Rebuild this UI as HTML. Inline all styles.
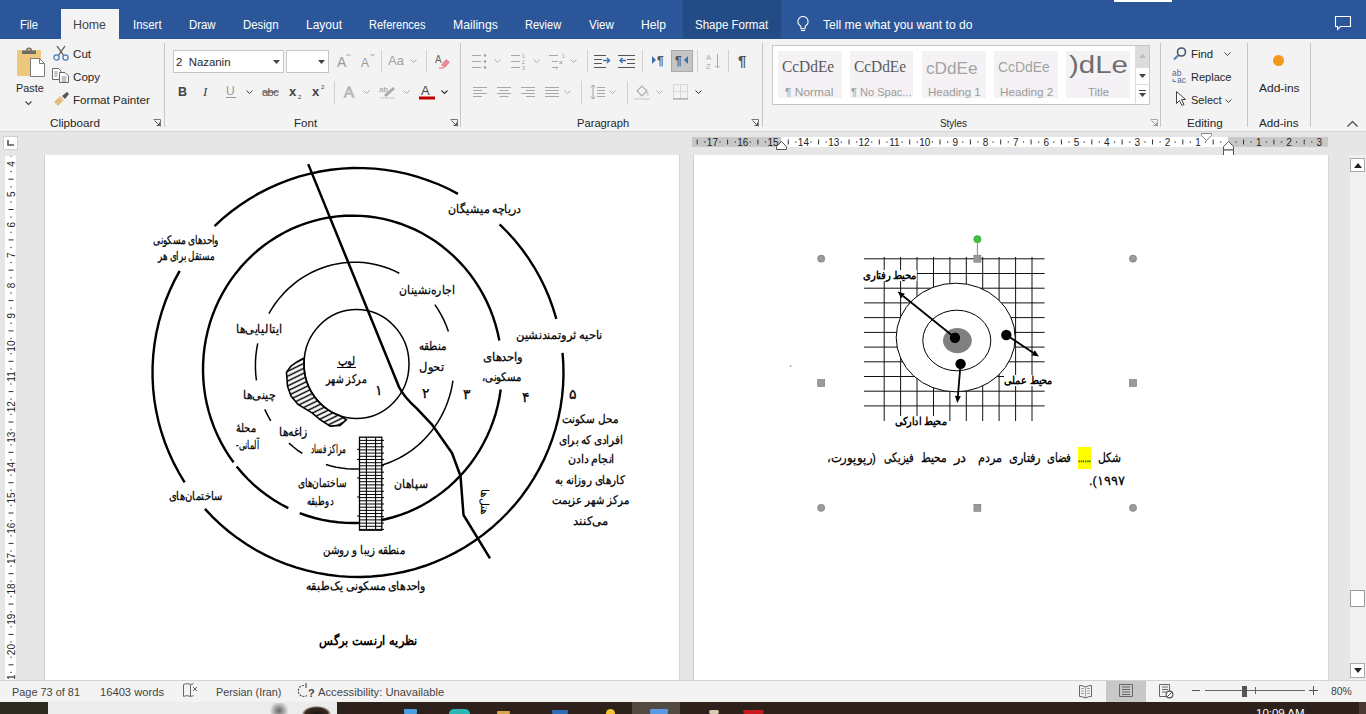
<!DOCTYPE html>
<html><head><meta charset="utf-8">
<style>
*{margin:0;padding:0;box-sizing:border-box}
html,body{width:1366px;height:714px;overflow:hidden;background:#e6e6e6;font-family:"Liberation Sans",sans-serif;position:relative}
.a{position:absolute;white-space:nowrap}
.t{line-height:1}
.fw{transform-origin:0 50%}
svg{overflow:visible}
</style></head><body>

<div class="a" style="left:0px;top:0px;width:1366px;height:39px;background:#2b579a"></div>
<div class="a" style="left:1114px;top:0px;width:58px;height:2px;background:#fff"></div>
<div class="a" style="left:683px;top:0px;width:98px;height:39px;background:#234b86"></div>
<div class="a" style="left:61px;top:9px;width:58px;height:30px;background:#f3f3f3"></div>
<div class="a t fw" style="left:20.4px;top:18.9px;font-size:12px;color:#fff;font-weight:normal;--w:18;">File</div>
<div class="a t fw" style="left:73.4px;top:19.4px;font-size:12px;color:#444;font-weight:normal;--w:33;">Home</div>
<div class="a t fw" style="left:133.2px;top:18.9px;font-size:12px;color:#fff;font-weight:normal;--w:28.6;">Insert</div>
<div class="a t fw" style="left:189.2px;top:18.9px;font-size:12px;color:#fff;font-weight:normal;--w:26.6;">Draw</div>
<div class="a t fw" style="left:243.2px;top:18.9px;font-size:12px;color:#fff;font-weight:normal;--w:35.5;">Design</div>
<div class="a t fw" style="left:306.0px;top:18.9px;font-size:12px;color:#fff;font-weight:normal;--w:36;">Layout</div>
<div class="a t fw" style="left:369.4px;top:18.9px;font-size:12px;color:#fff;font-weight:normal;--w:56.5;">References</div>
<div class="a t fw" style="left:453.2px;top:18.9px;font-size:12px;color:#fff;font-weight:normal;--w:44.8;">Mailings</div>
<div class="a t fw" style="left:525.4px;top:18.9px;font-size:12px;color:#fff;font-weight:normal;--w:36.1;">Review</div>
<div class="a t fw" style="left:588.9px;top:18.9px;font-size:12px;color:#fff;font-weight:normal;--w:24.9;">View</div>
<div class="a t fw" style="left:641.1px;top:18.9px;font-size:12px;color:#fff;font-weight:normal;--w:24.9;">Help</div>
<div class="a t fw" style="left:694.6px;top:18.9px;font-size:12px;color:#fff;font-weight:normal;--w:73.1;">Shape Format</div>
<div class="a t fw" style="left:823.4px;top:18.9px;font-size:12px;color:#fff;font-weight:normal;--w:149.5;">Tell me what you want to do</div>
<svg class="a" style="left:796px;top:15px;" width="14" height="17" viewBox="0 0 14 17"><path d="M7 1.5a5 5 0 0 0-3 9c.6.6 1 1.3 1 2.2v1h4v-1c0-.9.4-1.6 1-2.2a5 5 0 0 0-3-9z" fill="none" stroke="#fff" stroke-width="1.1"/><path d="M5 15.5h4" stroke="#fff" stroke-width="1.1"/></svg>
<svg class="a" style="left:1335px;top:16px;" width="17" height="15" viewBox="0 0 17 15"><path d="M.5 .5h15v10h-10l-3 3v-3h-2z" fill="none" stroke="#fff" stroke-width="1.1"/></svg>
<div class="a" style="left:0px;top:39px;width:1366px;height:92px;background:#f3f3f3"></div>
<div class="a" style="left:0px;top:131px;width:1366px;height:1px;background:#d4d4d4"></div>
<div class="a" style="left:164px;top:43px;width:1px;height:84px;background:#c6c6c6"></div>
<div class="a" style="left:460px;top:43px;width:1px;height:84px;background:#c6c6c6"></div>
<div class="a" style="left:762px;top:43px;width:1px;height:84px;background:#c6c6c6"></div>
<div class="a" style="left:1160px;top:43px;width:1px;height:84px;background:#c6c6c6"></div>
<div class="a" style="left:1247px;top:43px;width:1px;height:84px;background:#c6c6c6"></div>
<div class="a" style="left:1310px;top:43px;width:1px;height:84px;background:#c6c6c6"></div>
<div class="a t fw" style="left:49.6px;top:117.0px;font-size:11.6px;color:#262626;font-weight:normal;--w:49.9;">Clipboard</div>
<div class="a t fw" style="left:293.5px;top:117.0px;font-size:11.6px;color:#262626;font-weight:normal;--w:23.1;">Font</div>
<div class="a t fw" style="left:577.3px;top:117.2px;font-size:11.6px;color:#262626;font-weight:normal;--w:52.2;">Paragraph</div>
<div class="a t fw" style="left:940.1px;top:117.4px;font-size:11.6px;color:#262626;font-weight:normal;--w:26.9;">Styles</div>
<div class="a t fw" style="left:1186.7px;top:117.2px;font-size:11.6px;color:#262626;font-weight:normal;--w:35.7;">Editing</div>
<div class="a t fw" style="left:1259.1px;top:117.2px;font-size:11.6px;color:#262626;font-weight:normal;--w:39.5;">Add-ins</div>
<svg class="a" style="left:153px;top:119px;" width="8" height="8" viewBox="0 0 8 8"><path d="M.5 .5h7v7" fill="none" stroke="#777" stroke-width="1"/><path d="M1.5 1.5l5 5M3.5 6.5h3v-3" fill="none" stroke="#555" stroke-width="1"/></svg>
<svg class="a" style="left:449.5px;top:119px;" width="8" height="8" viewBox="0 0 8 8"><path d="M.5 .5h7v7" fill="none" stroke="#777" stroke-width="1"/><path d="M1.5 1.5l5 5M3.5 6.5h3v-3" fill="none" stroke="#555" stroke-width="1"/></svg>
<svg class="a" style="left:751px;top:119px;" width="8" height="8" viewBox="0 0 8 8"><path d="M.5 .5h7v7" fill="none" stroke="#777" stroke-width="1"/><path d="M1.5 1.5l5 5M3.5 6.5h3v-3" fill="none" stroke="#555" stroke-width="1"/></svg>
<svg class="a" style="left:1150px;top:119px;" width="8" height="8" viewBox="0 0 8 8"><path d="M.5 .5h7v7" fill="none" stroke="#aaa" stroke-width="1"/><path d="M1.5 1.5l5 5M3.5 6.5h3v-3" fill="none" stroke="#999" stroke-width="1"/></svg>
<svg class="a" style="left:1347px;top:121px;" width="11" height="6" viewBox="0 0 11 6"><path d="M.5 5.5l5-5 5 5" fill="none" stroke="#444" stroke-width="1.2"/></svg>
<svg class="a" style="left:16px;top:47px;" width="30" height="30" viewBox="0 0 30 30"><rect x="1" y="3" width="24" height="26" rx="1" fill="#edc87c"/>
<path d="M6 3.5h14v3.5H6z" fill="#6b6b6b"/><path d="M10 3.5a3 3 0 0 1 6 0z" fill="#6b6b6b"/><circle cx="13" cy="2.6" r="1" fill="#edc87c"/>
<path d="M14.5 11.5h9l5 5v13h-14z" fill="#fff" stroke="#7a7a7a" stroke-width="1"/><path d="M23.5 11.5v5h5" fill="none" stroke="#7a7a7a" stroke-width="1"/></svg>
<div class="a t fw" style="left:15.5px;top:81.7px;font-size:11.6px;color:#262626;font-weight:normal;--w:27.7;">Paste</div>
<svg class="a" style="left:25px;top:101px;" width="7" height="4" viewBox="0 0 7 4"><path d="M.5 .5l3 3 3-3" fill="none" stroke="#444" stroke-width="1.1"/></svg>
<svg class="a" style="left:53px;top:45px;" width="16" height="16" viewBox="0 0 16 16"><path d="M4 1l7 10M12 1L5 11" stroke="#555" stroke-width="1.3" fill="none"/>
<circle cx="3.5" cy="12.5" r="2.6" fill="none" stroke="#4a7ebb" stroke-width="1.3"/><circle cx="12.5" cy="12.5" r="2.6" fill="none" stroke="#4a7ebb" stroke-width="1.3"/></svg>
<div class="a t fw" style="left:72.8px;top:47.6px;font-size:11.6px;color:#262626;font-weight:normal;--w:18.1;">Cut</div>
<svg class="a" style="left:52px;top:68px;" width="17" height="15" viewBox="0 0 17 15"><path d="M.5 .5h6l2.5 2.5v8.5H.5z" fill="#fff" stroke="#666"/><path d="M7.5 4.5h5.5l3.5 3.5v6.5h-9z" fill="#fff" stroke="#666"/>
<path d="M2.5 4h3M2.5 6h3M2.5 8h3M9.5 9h5M9.5 11h5M9.5 13h5" stroke="#777" stroke-width=".9"/></svg>
<div class="a t fw" style="left:72.8px;top:70.8px;font-size:11.6px;color:#262626;font-weight:normal;--w:27.1;">Copy</div>
<svg class="a" style="left:53px;top:91px;" width="16" height="15" viewBox="0 0 16 15"><path d="M9 5l5-4 2 2-4 5z" fill="#555"/><path d="M1 11l6-6 4 4-6 6z" fill="#e6c48a"/><path d="M2 12l4-4M4 14l4-4" stroke="#c9a060" stroke-width=".8"/></svg>
<div class="a t fw" style="left:72.8px;top:94.0px;font-size:11.6px;color:#262626;font-weight:normal;--w:76.9;">Format Painter</div>
<div class="a" style="left:173px;top:50px;width:111px;height:23px;background:#fff;border:1px solid #c6c6c6"></div>
<div class="a t fw" style="left:175.8px;top:56.1px;font-size:11.6px;color:#262626;font-weight:normal;--w:54.5;">2&nbsp; Nazanin</div>
<svg class="a" style="left:273px;top:60px;" width="7" height="4" viewBox="0 0 7 4"><path d="M0 0h7L3.5 4z" fill="#444"/></svg>
<div class="a" style="left:286px;top:50px;width:43px;height:23px;background:#fff;border:1px solid #c6c6c6"></div>
<svg class="a" style="left:318px;top:60px;" width="7" height="4" viewBox="0 0 7 4"><path d="M0 0h7L3.5 4z" fill="#444"/></svg>
<svg class="a" style="left:337px;top:53px;" width="14" height="15" viewBox="0 0 14 15"><text x="0" y="14" font-size="14" fill="#9a9a9a" font-family="Liberation Sans">A</text><path d="M9.5 3l2-2 2 2" fill="none" stroke="#9a9a9a"/></svg>
<svg class="a" style="left:361px;top:53px;" width="14" height="15" viewBox="0 0 14 15"><text x="0" y="14" font-size="12" fill="#9a9a9a" font-family="Liberation Sans">A</text><path d="M9.5 1l2 2 2-2" fill="none" stroke="#9a9a9a"/></svg>
<div class="a" style="left:381px;top:50px;width:1px;height:22px;background:#d0d0d0"></div>
<svg class="a" style="left:388px;top:53px;" width="17" height="13" viewBox="0 0 17 13"><text x="0" y="12" font-size="13" fill="#a0a0a0" font-family="Liberation Sans">Aa</text></svg>
<svg class="a" style="left:410px;top:59px;" width="7" height="4" viewBox="0 0 7 4"><path d="M.5 .5l3 3 3-3" fill="none" stroke="#aaa" stroke-width="1"/></svg>
<div class="a" style="left:426px;top:50px;width:1px;height:22px;background:#d0d0d0"></div>
<svg class="a" style="left:435px;top:54px;" width="15" height="15" viewBox="0 0 15 15"><text x="0" y="9" font-size="10" fill="#666" font-family="Liberation Sans">A</text><path d="M6 11l5-6 4 3-5 6z" fill="#e88a9a"/><path d="M4 14h5" stroke="#e88a9a" stroke-width="1.4"/></svg>
<svg class="a" style="left:178px;top:85px;" width="10" height="12" viewBox="0 0 10 12"><text x="0" y="11" font-size="12.5" font-weight="bold" fill="#444" font-family="Liberation Sans">B</text></svg>
<svg class="a" style="left:203px;top:85px;" width="10" height="12" viewBox="0 0 10 12"><text x="0" y="11" font-size="13" font-style="italic" fill="#444" font-family="Liberation Serif">I</text></svg>
<svg class="a" style="left:226px;top:85px;" width="11" height="14" viewBox="0 0 11 14"><text x="0" y="10" font-size="12" fill="#9a9a9a" font-family="Liberation Sans">U</text><path d="M0 12.5h10" stroke="#9a9a9a" stroke-width="1"/></svg>
<svg class="a" style="left:246px;top:90px;" width="7" height="4" viewBox="0 0 7 4"><path d="M.5 .5l3 3 3-3" fill="none" stroke="#444" stroke-width="1"/></svg>
<svg class="a" style="left:262px;top:86px;" width="18" height="11" viewBox="0 0 18 11"><text x="0" y="9.5" font-size="11" fill="#555" font-family="Liberation Sans" letter-spacing="-.5">abc</text><path d="M0 6h17" stroke="#555" stroke-width=".9"/></svg>
<svg class="a" style="left:289px;top:86px;" width="14" height="13" viewBox="0 0 14 13"><text x="0" y="10" font-size="13" font-weight="bold" fill="#444" font-family="Liberation Sans">x</text><text x="9" y="13" font-size="6" fill="#444" font-family="Liberation Sans">2</text></svg>
<svg class="a" style="left:312px;top:84px;" width="14" height="13" viewBox="0 0 14 13"><text x="0" y="12" font-size="13" font-weight="bold" fill="#444" font-family="Liberation Sans">x</text><text x="9" y="5" font-size="6" fill="#444" font-family="Liberation Sans">2</text></svg>
<div class="a" style="left:334px;top:81px;width:1px;height:23px;background:#d0d0d0"></div>
<svg class="a" style="left:344px;top:84px;" width="13" height="14" viewBox="0 0 13 14"><text x="0" y="13" font-size="15" fill="none" stroke="#aaa" stroke-width=".8" font-family="Liberation Sans">A</text></svg>
<svg class="a" style="left:363px;top:90px;" width="7" height="4" viewBox="0 0 7 4"><path d="M.5 .5l3 3 3-3" fill="none" stroke="#aaa" stroke-width="1"/></svg>
<svg class="a" style="left:379px;top:84px;" width="17" height="15" viewBox="0 0 17 15"><text x="0" y="8" font-size="8" fill="#999" font-family="Liberation Sans">ab</text><path d="M5 11l9-8 2 2-9 8z" fill="#aaa"/><path d="M1 14h15" stroke="#ddd" stroke-width="2"/></svg>
<svg class="a" style="left:403px;top:90px;" width="7" height="4" viewBox="0 0 7 4"><path d="M.5 .5l3 3 3-3" fill="none" stroke="#aaa" stroke-width="1"/></svg>
<svg class="a" style="left:419px;top:84px;" width="17" height="16" viewBox="0 0 17 16"><text x="2" y="11" font-size="13" fill="#444" font-family="Liberation Sans">A</text><rect x="0" y="12.5" width="16" height="3" fill="#c00000"/></svg>
<svg class="a" style="left:441px;top:90px;" width="7" height="4" viewBox="0 0 7 4"><path d="M.5 .5l3 3 3-3" fill="none" stroke="#333" stroke-width="1.1"/></svg>
<svg class="a" style="left:472px;top:53px;" width="15" height="16" viewBox="0 0 15 16"><path d="M0 2.5h9" stroke="#a8a8a8" stroke-width="1"/><path d="M0 8.5h9" stroke="#a8a8a8" stroke-width="1"/><path d="M0 14.5h9" stroke="#a8a8a8" stroke-width="1"/><circle cx="13" cy="2.5" r="1.2" fill="#999"/><circle cx="13" cy="8.5" r="1.2" fill="#999"/><circle cx="13" cy="14.5" r="1.2" fill="#999"/></svg>
<svg class="a" style="left:494px;top:59px;" width="7" height="4" viewBox="0 0 7 4"><path d="M.5 .5l3 3 3-3" fill="none" stroke="#aaa" stroke-width="1"/></svg>
<svg class="a" style="left:511px;top:53px;" width="16" height="16" viewBox="0 0 16 16"><path d="M0 2.5h9" stroke="#a8a8a8" stroke-width="1"/><path d="M0 8.5h9" stroke="#a8a8a8" stroke-width="1"/><path d="M0 14.5h9" stroke="#a8a8a8" stroke-width="1"/><text x="11" y="5" font-size="5" fill="#999">1</text><text x="11" y="11" font-size="5" fill="#999">2</text><text x="11" y="17" font-size="5" fill="#999">3</text></svg>
<svg class="a" style="left:533px;top:59px;" width="7" height="4" viewBox="0 0 7 4"><path d="M.5 .5l3 3 3-3" fill="none" stroke="#aaa" stroke-width="1"/></svg>
<svg class="a" style="left:549px;top:53px;" width="18" height="17" viewBox="0 0 18 17"><path d="M0 2.5h9" stroke="#a8a8a8" stroke-width="1"/><path d="M3 8.5h6" stroke="#a8a8a8" stroke-width="1"/><path d="M3 14.5h6" stroke="#a8a8a8" stroke-width="1"/><text x="13" y="5" font-size="5" fill="#999">1</text><text x="10" y="11" font-size="6" fill="#999">a</text><text x="7" y="17" font-size="5" fill="#999">i</text></svg>
<svg class="a" style="left:570px;top:59px;" width="7" height="4" viewBox="0 0 7 4"><path d="M.5 .5l3 3 3-3" fill="none" stroke="#aaa" stroke-width="1"/></svg>
<div class="a" style="left:587px;top:50px;width:1px;height:22px;background:#d0d0d0"></div>
<svg class="a" style="left:594px;top:54px;" width="17" height="14" viewBox="0 0 17 14"><path d="M0 1.5h12" stroke="#555" stroke-width="1"/><path d="M0 5.5h8" stroke="#555" stroke-width="1"/><path d="M0 9.5h8" stroke="#555" stroke-width="1"/><path d="M0 13.5h12" stroke="#555" stroke-width="1"/><path d="M9 6.5h6M13 4l2.5 2.5-2.5 2.5" stroke="#3c6fb0" stroke-width="1.4" fill="none"/></svg>
<svg class="a" style="left:618px;top:54px;" width="18" height="14" viewBox="0 0 18 14"><path d="M0 1.5h17" stroke="#555" stroke-width="1"/><path d="M9 5.5h8" stroke="#555" stroke-width="1"/><path d="M9 9.5h8" stroke="#555" stroke-width="1"/><path d="M0 13.5h17" stroke="#555" stroke-width="1"/><path d="M2 6.5h6M4.5 4L2 6.5 4.5 9" stroke="#3c6fb0" stroke-width="1.4" fill="none"/></svg>
<div class="a" style="left:642px;top:50px;width:1px;height:22px;background:#d0d0d0"></div>
<svg class="a" style="left:652px;top:54px;" width="13" height="13" viewBox="0 0 13 13"><path d="M0 2l4 4-4 4z" fill="#3c6fb0"/><text x="5" y="11" font-size="12" font-weight="bold" fill="#555" font-family="Liberation Sans">¶</text></svg>
<div class="a" style="left:671px;top:50px;width:22px;height:22px;background:#c5c5c5;border:1px solid #a9a9a9"></div>
<svg class="a" style="left:675px;top:54px;" width="15" height="13" viewBox="0 0 15 13"><text x="0" y="11" font-size="12" font-weight="bold" fill="#555" font-family="Liberation Sans">¶</text><path d="M13 2L9 6l4 4z" fill="#3c6fb0"/></svg>
<div class="a" style="left:697px;top:50px;width:1px;height:22px;background:#d0d0d0"></div>
<svg class="a" style="left:706px;top:53px;" width="15" height="17" viewBox="0 0 15 17"><text x="0" y="7" font-size="7.5" fill="#aaa" font-family="Liberation Sans">A</text><text x="0" y="16" font-size="7.5" fill="#aaa" font-family="Liberation Sans">Z</text><path d="M11.5 1v14M9 12.5l2.5 2.5 2.5-2.5" fill="none" stroke="#aaa"/></svg>
<div class="a" style="left:728px;top:50px;width:1px;height:22px;background:#d0d0d0"></div>
<svg class="a" style="left:738px;top:53px;" width="12" height="15" viewBox="0 0 12 15"><text x="0" y="13" font-size="15" font-weight="bold" fill="#555" font-family="Liberation Sans">¶</text></svg>
<svg class="a" style="left:473px;top:87px;" width="15" height="10" viewBox="0 0 15 10"><path d="M0 0.5h14" stroke="#a8a8a8" stroke-width="1"/><path d="M0 3.5h9" stroke="#a8a8a8" stroke-width="1"/><path d="M0 6.5h14" stroke="#a8a8a8" stroke-width="1"/><path d="M0 9.5h9" stroke="#a8a8a8" stroke-width="1"/></svg>
<svg class="a" style="left:497px;top:87px;" width="15" height="10" viewBox="0 0 15 10"><path d="M0 0.5h14" stroke="#a8a8a8" stroke-width="1"/><path d="M2.5 3.5h9" stroke="#a8a8a8" stroke-width="1"/><path d="M0 6.5h14" stroke="#a8a8a8" stroke-width="1"/><path d="M2.5 9.5h9" stroke="#a8a8a8" stroke-width="1"/></svg>
<svg class="a" style="left:521px;top:87px;" width="15" height="10" viewBox="0 0 15 10"><path d="M0 0.5h14" stroke="#a8a8a8" stroke-width="1"/><path d="M5 3.5h9" stroke="#a8a8a8" stroke-width="1"/><path d="M0 6.5h14" stroke="#a8a8a8" stroke-width="1"/><path d="M5 9.5h9" stroke="#a8a8a8" stroke-width="1"/></svg>
<svg class="a" style="left:545px;top:87px;" width="15" height="10" viewBox="0 0 15 10"><path d="M0 0.5h14" stroke="#a8a8a8" stroke-width="1"/><path d="M0 3.5h14" stroke="#a8a8a8" stroke-width="1"/><path d="M0 6.5h14" stroke="#a8a8a8" stroke-width="1"/><path d="M0 9.5h14" stroke="#a8a8a8" stroke-width="1"/></svg>
<svg class="a" style="left:564px;top:90px;" width="7" height="4" viewBox="0 0 7 4"><path d="M.5 .5l3 3 3-3" fill="none" stroke="#aaa" stroke-width="1"/></svg>
<div class="a" style="left:581px;top:81px;width:1px;height:23px;background:#d0d0d0"></div>
<svg class="a" style="left:590px;top:84px;" width="15" height="16" viewBox="0 0 15 16"><path d="M3 1v14M.8 3.5L3 1l2.2 2.5M.8 12.5L3 15l2.2-2.5" fill="none" stroke="#a0a0a0" stroke-width="1"/><path d="M7 3.5h8" stroke="#a8a8a8" stroke-width="1"/><path d="M7 6.5h8" stroke="#a8a8a8" stroke-width="1"/><path d="M7 9.5h8" stroke="#a8a8a8" stroke-width="1"/><path d="M7 12.5h8" stroke="#a8a8a8" stroke-width="1"/></svg>
<svg class="a" style="left:609px;top:90px;" width="7" height="4" viewBox="0 0 7 4"><path d="M.5 .5l3 3 3-3" fill="none" stroke="#aaa" stroke-width="1"/></svg>
<div class="a" style="left:627px;top:81px;width:1px;height:23px;background:#d0d0d0"></div>
<svg class="a" style="left:634px;top:84px;" width="16" height="16" viewBox="0 0 16 16"><path d="M3 7l5-5 5 5-5 5z" fill="none" stroke="#aaa" stroke-width="1.1"/><path d="M13 8c1 2 1.5 3 .5 4" stroke="#bbb" fill="none"/><rect x="0" y="14" width="16" height="2" fill="#ddd"/></svg>
<svg class="a" style="left:656px;top:90px;" width="7" height="4" viewBox="0 0 7 4"><path d="M.5 .5l3 3 3-3" fill="none" stroke="#aaa" stroke-width="1"/></svg>
<svg class="a" style="left:673px;top:84px;" width="15" height="16" viewBox="0 0 15 16"><path d="M.5 .5h14v14H.5zM7.5 .5v14M.5 7.5h14" fill="none" stroke="#bbb" stroke-width="1" stroke-dasharray="1 1"/><path d="M0 15h15" stroke="#999" stroke-width="1"/></svg>
<svg class="a" style="left:695px;top:90px;" width="7" height="4" viewBox="0 0 7 4"><path d="M.5 .5l3 3 3-3" fill="none" stroke="#333" stroke-width="1"/></svg>
<div class="a" style="left:772px;top:45px;width:378px;height:60px;background:#fff;border:1px solid #c6c6c6"></div>
<div class="a" style="left:778.3px;top:51px;width:63.5px;height:47px;background:#f5f2f5"></div>
<div class="a" style="left:849.5px;top:51px;width:63.5px;height:47px;background:#f5f2f5"></div>
<div class="a" style="left:922px;top:51px;width:63.5px;height:47px;background:#f5f2f5"></div>
<div class="a" style="left:994px;top:51px;width:63.5px;height:47px;background:#f5f2f5"></div>
<div class="a" style="left:1066.1px;top:51px;width:63.5px;height:47px;background:#f5f2f5"></div>
<div class="a t fw" style="left:781.8px;top:58.5px;font-family:&quot;Liberation Serif&quot;;font-size:15.7px;color:#5a5a5a;--w:52.2">CcDdEe</div>
<div class="a t fw" style="left:853.5px;top:58.5px;font-family:&quot;Liberation Serif&quot;;font-size:15.7px;color:#5a5a5a;--w:52.1">CcDdEe</div>
<div class="a t fw" style="left:925.9px;top:59.5px;font-family:&quot;Liberation Sans&quot;;font-size:16.5px;color:#a3a3a3;--w:51.5">cDdEe</div>
<div class="a t fw" style="left:997.6px;top:59.5px;font-family:&quot;Liberation Sans&quot;;font-size:14.5px;color:#a3a3a3;--w:51.8">CcDdEe</div>
<div class="a t fw" style="left:1068.8px;top:53.6px;font-family:&quot;Liberation Sans&quot;;font-size:23.5px;color:#6e6e6e;--w:58.9">)dLe</div>
<div class="a t fw" style="left:785.0px;top:85.8px;font-size:11.6px;color:#9a9a9a;font-weight:normal;--w:48.3;">¶ Normal</div>
<div class="a t fw" style="left:851.4px;top:85.8px;font-size:11.6px;color:#9a9a9a;font-weight:normal;--w:60.5;">¶ No Spac...</div>
<div class="a t fw" style="left:927.7px;top:85.8px;font-size:11.6px;color:#9a9a9a;font-weight:normal;--w:52.7;">Heading 1</div>
<div class="a t fw" style="left:999.7px;top:85.8px;font-size:11.6px;color:#9a9a9a;font-weight:normal;--w:53.3;">Heading 2</div>
<div class="a t fw" style="left:1088.1px;top:85.8px;font-size:11.6px;color:#9a9a9a;font-weight:normal;--w:21.1;">Title</div>
<div class="a" style="left:1135px;top:46px;width:14px;height:58px;background:#fff;border-left:1px solid #ddd"></div>
<div class="a" style="left:1136px;top:46px;width:13px;height:21px;background:#dcdcdc"></div>
<svg class="a" style="left:1139px;top:54px;" width="7" height="4" viewBox="0 0 7 4"><path d="M0 4h7L3.5 0z" fill="#bbb"/></svg>
<div class="a" style="left:1136px;top:67px;width:13px;height:1px;background:#ddd"></div>
<svg class="a" style="left:1139px;top:74px;" width="7" height="4" viewBox="0 0 7 4"><path d="M0 0h7L3.5 4z" fill="#444"/></svg>
<div class="a" style="left:1136px;top:84px;width:13px;height:1px;background:#ddd"></div>
<svg class="a" style="left:1139px;top:90px;" width="7" height="7" viewBox="0 0 7 7"><path d="M0 .5h7" stroke="#444"/><path d="M0 3h7L3.5 7z" fill="#444"/></svg>
<svg class="a" style="left:1173px;top:47px;" width="14" height="13" viewBox="0 0 14 13"><circle cx="8.5" cy="5" r="4" fill="none" stroke="#44546a" stroke-width="1.6"/><path d="M5.5 8L1 12.5" stroke="#5a80b5" stroke-width="2.2"/></svg>
<div class="a t fw" style="left:1191.4px;top:47.9px;font-size:11.6px;color:#262626;font-weight:normal;--w:22.2;">Find</div>
<svg class="a" style="left:1224px;top:52px;" width="7" height="4" viewBox="0 0 7 4"><path d="M.5 .5l3 3 3-3" fill="none" stroke="#444" stroke-width="1"/></svg>
<svg class="a" style="left:1172px;top:69px;" width="17" height="15" viewBox="0 0 17 15"><text x="0" y="7" font-size="8.5" fill="#6a5a8c" font-family="Liberation Sans">ab</text><text x="5" y="14" font-size="8.5" fill="#4a6a9a" font-family="Liberation Sans">ac</text><path d="M1 10v2.5h3" fill="none" stroke="#4a6a9a" stroke-width=".9"/></svg>
<div class="a t fw" style="left:1191.4px;top:71.3px;font-size:11.6px;color:#262626;font-weight:normal;--w:40.5;">Replace</div>
<svg class="a" style="left:1176px;top:91px;" width="10" height="15" viewBox="0 0 10 15"><path d="M.5.5v12l3-3 2.5 5 2-1-2.5-5h4z" fill="#fff" stroke="#444" stroke-width="1"/></svg>
<div class="a t fw" style="left:1191.4px;top:93.8px;font-size:11.6px;color:#262626;font-weight:normal;--w:30.6;">Select</div>
<svg class="a" style="left:1225px;top:99px;" width="7" height="4" viewBox="0 0 7 4"><path d="M.5 .5l3 3 3-3" fill="none" stroke="#444" stroke-width="1"/></svg>
<div class="a" style="left:1272.5px;top:54.5px;width:11px;height:11px;border-radius:50%;background:#f39a1e"></div>
<div class="a t fw" style="left:1258.8px;top:82.1px;font-size:11.6px;color:#262626;font-weight:normal;--w:40.6;">Add-ins</div>
<div class="a" style="left:0px;top:132px;width:1366px;height:548px;background:#e6e6e6"></div>
<div class="a" style="left:3px;top:136px;width:15px;height:14px;background:#fff;border:1px solid #d0d0d0"></div>
<svg class="a" style="left:7px;top:140px;" width="7" height="6" viewBox="0 0 7 6"><path d="M1 0v5h6" fill="none" stroke="#555" stroke-width="1.6"/></svg>
<div class="a" style="left:692px;top:137px;width:89px;height:10px;background:#c8c8c8"></div>
<div class="a" style="left:781px;top:137px;width:447px;height:10px;background:#fff"></div>
<div class="a" style="left:1228px;top:137px;width:100px;height:10px;background:#c8c8c8"></div>
<svg class="a" style="left:0;top:0" width="1366" height="160"><rect x="1220.2" y="141.4" width="1.2" height="1.2" fill="#333"/><path d="M1213.2 139.5v5" stroke="#333" stroke-width="1"/><rect x="1205.0" y="141.4" width="1.2" height="1.2" fill="#333"/><rect x="1189.8" y="141.4" width="1.2" height="1.2" fill="#333"/><path d="M1182.8 139.5v5" stroke="#333" stroke-width="1"/><rect x="1174.6" y="141.4" width="1.2" height="1.2" fill="#333"/><rect x="1159.5" y="141.4" width="1.2" height="1.2" fill="#333"/><path d="M1152.5 139.5v5" stroke="#333" stroke-width="1"/><rect x="1144.3" y="141.4" width="1.2" height="1.2" fill="#333"/><rect x="1129.1" y="141.4" width="1.2" height="1.2" fill="#333"/><path d="M1122.1 139.5v5" stroke="#333" stroke-width="1"/><rect x="1113.9" y="141.4" width="1.2" height="1.2" fill="#333"/><rect x="1098.8" y="141.4" width="1.2" height="1.2" fill="#333"/><path d="M1091.8 139.5v5" stroke="#333" stroke-width="1"/><rect x="1083.6" y="141.4" width="1.2" height="1.2" fill="#333"/><rect x="1068.4" y="141.4" width="1.2" height="1.2" fill="#333"/><path d="M1061.4 139.5v5" stroke="#333" stroke-width="1"/><rect x="1053.2" y="141.4" width="1.2" height="1.2" fill="#333"/><rect x="1038.1" y="141.4" width="1.2" height="1.2" fill="#333"/><path d="M1031.1 139.5v5" stroke="#333" stroke-width="1"/><rect x="1022.9" y="141.4" width="1.2" height="1.2" fill="#333"/><rect x="1007.7" y="141.4" width="1.2" height="1.2" fill="#333"/><path d="M1000.7 139.5v5" stroke="#333" stroke-width="1"/><rect x="992.5" y="141.4" width="1.2" height="1.2" fill="#333"/><rect x="977.4" y="141.4" width="1.2" height="1.2" fill="#333"/><path d="M970.4 139.5v5" stroke="#333" stroke-width="1"/><rect x="962.2" y="141.4" width="1.2" height="1.2" fill="#333"/><rect x="947.0" y="141.4" width="1.2" height="1.2" fill="#333"/><path d="M940.0 139.5v5" stroke="#333" stroke-width="1"/><rect x="931.8" y="141.4" width="1.2" height="1.2" fill="#333"/><rect x="916.7" y="141.4" width="1.2" height="1.2" fill="#333"/><path d="M909.7 139.5v5" stroke="#333" stroke-width="1"/><rect x="901.5" y="141.4" width="1.2" height="1.2" fill="#333"/><rect x="886.3" y="141.4" width="1.2" height="1.2" fill="#333"/><path d="M879.3 139.5v5" stroke="#333" stroke-width="1"/><rect x="871.1" y="141.4" width="1.2" height="1.2" fill="#333"/><rect x="856.0" y="141.4" width="1.2" height="1.2" fill="#333"/><path d="M849.0 139.5v5" stroke="#333" stroke-width="1"/><rect x="840.8" y="141.4" width="1.2" height="1.2" fill="#333"/><rect x="825.6" y="141.4" width="1.2" height="1.2" fill="#333"/><path d="M818.6 139.5v5" stroke="#333" stroke-width="1"/><rect x="810.4" y="141.4" width="1.2" height="1.2" fill="#333"/><rect x="795.3" y="141.4" width="1.2" height="1.2" fill="#333"/><path d="M788.3 139.5v5" stroke="#333" stroke-width="1"/><rect x="780.1" y="141.4" width="1.2" height="1.2" fill="#333"/><rect x="764.9" y="141.4" width="1.2" height="1.2" fill="#333"/><path d="M757.9 139.5v5" stroke="#333" stroke-width="1"/><rect x="749.7" y="141.4" width="1.2" height="1.2" fill="#333"/><rect x="734.6" y="141.4" width="1.2" height="1.2" fill="#333"/><path d="M727.6 139.5v5" stroke="#333" stroke-width="1"/><rect x="719.4" y="141.4" width="1.2" height="1.2" fill="#333"/><rect x="704.2" y="141.4" width="1.2" height="1.2" fill="#333"/><path d="M697.2 139.5v5" stroke="#333" stroke-width="1"/><rect x="1235.3" y="141.4" width="1.2" height="1.2" fill="#333"/><path d="M1243.5 139.5v5" stroke="#333" stroke-width="1"/><rect x="1250.5" y="141.4" width="1.2" height="1.2" fill="#333"/><rect x="1265.7" y="141.4" width="1.2" height="1.2" fill="#333"/><path d="M1273.9 139.5v5" stroke="#333" stroke-width="1"/><rect x="1280.9" y="141.4" width="1.2" height="1.2" fill="#333"/><rect x="1296.0" y="141.4" width="1.2" height="1.2" fill="#333"/><path d="M1304.2 139.5v5" stroke="#333" stroke-width="1"/><rect x="1311.2" y="141.4" width="1.2" height="1.2" fill="#333"/><text x="1198.0" y="146" font-size="10" fill="#222" text-anchor="middle" font-family="Liberation Sans">1</text><text x="1167.6" y="146" font-size="10" fill="#222" text-anchor="middle" font-family="Liberation Sans">2</text><text x="1137.3" y="146" font-size="10" fill="#222" text-anchor="middle" font-family="Liberation Sans">3</text><text x="1106.9" y="146" font-size="10" fill="#222" text-anchor="middle" font-family="Liberation Sans">4</text><text x="1076.6" y="146" font-size="10" fill="#222" text-anchor="middle" font-family="Liberation Sans">5</text><text x="1046.2" y="146" font-size="10" fill="#222" text-anchor="middle" font-family="Liberation Sans">6</text><text x="1015.9" y="146" font-size="10" fill="#222" text-anchor="middle" font-family="Liberation Sans">7</text><text x="985.5" y="146" font-size="10" fill="#222" text-anchor="middle" font-family="Liberation Sans">8</text><text x="955.2" y="146" font-size="10" fill="#222" text-anchor="middle" font-family="Liberation Sans">9</text><text x="924.8" y="146" font-size="10" fill="#222" text-anchor="middle" font-family="Liberation Sans">10</text><text x="894.5" y="146" font-size="10" fill="#222" text-anchor="middle" font-family="Liberation Sans">11</text><text x="864.1" y="146" font-size="10" fill="#222" text-anchor="middle" font-family="Liberation Sans">12</text><text x="833.8" y="146" font-size="10" fill="#222" text-anchor="middle" font-family="Liberation Sans">13</text><text x="803.4" y="146" font-size="10" fill="#222" text-anchor="middle" font-family="Liberation Sans">14</text><text x="773.1" y="146" font-size="10" fill="#222" text-anchor="middle" font-family="Liberation Sans">15</text><text x="742.7" y="146" font-size="10" fill="#222" text-anchor="middle" font-family="Liberation Sans">16</text><text x="712.4" y="146" font-size="10" fill="#222" text-anchor="middle" font-family="Liberation Sans">17</text><text x="1258.7" y="146" font-size="10" fill="#222" text-anchor="middle" font-family="Liberation Sans">1</text><text x="1289.0" y="146" font-size="10" fill="#222" text-anchor="middle" font-family="Liberation Sans">2</text><text x="1319.4" y="146" font-size="10" fill="#222" text-anchor="middle" font-family="Liberation Sans">3</text></svg>
<svg class="a" style="left:776px;top:141px;" width="11" height="9" viewBox="0 0 11 9"><path d="M.5 5.5l5-5 5 5v3h-10z" fill="#fff" stroke="#555" stroke-width="1"/></svg>
<svg class="a" style="left:1201px;top:133px;" width="11" height="8" viewBox="0 0 11 8"><path d="M.5 .5h10v2l-5 5-5-5z" fill="#fff" stroke="#888" stroke-width="1"/></svg>
<svg class="a" style="left:1223px;top:141px;" width="11" height="15" viewBox="0 0 11 15"><path d="M.5 5.5l5-5 5 5v3.5h-10z" fill="#fff" stroke="#555" stroke-width="1"/><path d="M.5 9h10v5.5h-10z" fill="#fff" stroke="#555" stroke-width="1"/></svg>
<div class="a" style="left:5px;top:156px;width:11px;height:524px;background:#fff"></div>
<div class="a" style="left:0;top:0;width:30px;height:680px;overflow:hidden"><svg style="position:absolute;left:0;top:0" width="30" height="714"><rect x="10.4" y="171.0" width="1.2" height="1.2" fill="#333"/><path d="M8.5 179.2h5" stroke="#333"/><rect x="10.4" y="186.2" width="1.2" height="1.2" fill="#333"/><text transform="translate(14.5 164.0) rotate(-90)" font-size="10" fill="#222" text-anchor="middle" font-family="Liberation Sans">4</text><rect x="10.4" y="201.3" width="1.2" height="1.2" fill="#333"/><path d="M8.5 209.5h5" stroke="#333"/><rect x="10.4" y="216.5" width="1.2" height="1.2" fill="#333"/><text transform="translate(14.5 194.3) rotate(-90)" font-size="10" fill="#222" text-anchor="middle" font-family="Liberation Sans">5</text><rect x="10.4" y="231.7" width="1.2" height="1.2" fill="#333"/><path d="M8.5 239.9h5" stroke="#333"/><rect x="10.4" y="246.9" width="1.2" height="1.2" fill="#333"/><text transform="translate(14.5 224.7) rotate(-90)" font-size="10" fill="#222" text-anchor="middle" font-family="Liberation Sans">6</text><rect x="10.4" y="262.0" width="1.2" height="1.2" fill="#333"/><path d="M8.5 270.2h5" stroke="#333"/><rect x="10.4" y="277.2" width="1.2" height="1.2" fill="#333"/><text transform="translate(14.5 255.1) rotate(-90)" font-size="10" fill="#222" text-anchor="middle" font-family="Liberation Sans">7</text><rect x="10.4" y="292.4" width="1.2" height="1.2" fill="#333"/><path d="M8.5 300.6h5" stroke="#333"/><rect x="10.4" y="307.6" width="1.2" height="1.2" fill="#333"/><text transform="translate(14.5 285.4) rotate(-90)" font-size="10" fill="#222" text-anchor="middle" font-family="Liberation Sans">8</text><rect x="10.4" y="322.7" width="1.2" height="1.2" fill="#333"/><path d="M8.5 330.9h5" stroke="#333"/><rect x="10.4" y="337.9" width="1.2" height="1.2" fill="#333"/><text transform="translate(14.5 315.8) rotate(-90)" font-size="10" fill="#222" text-anchor="middle" font-family="Liberation Sans">9</text><rect x="10.4" y="353.1" width="1.2" height="1.2" fill="#333"/><path d="M8.5 361.3h5" stroke="#333"/><rect x="10.4" y="368.3" width="1.2" height="1.2" fill="#333"/><text transform="translate(14.5 346.1) rotate(-90)" font-size="10" fill="#222" text-anchor="middle" font-family="Liberation Sans">10</text><rect x="10.4" y="383.4" width="1.2" height="1.2" fill="#333"/><path d="M8.5 391.6h5" stroke="#333"/><rect x="10.4" y="398.6" width="1.2" height="1.2" fill="#333"/><text transform="translate(14.5 376.5) rotate(-90)" font-size="10" fill="#222" text-anchor="middle" font-family="Liberation Sans">11</text><rect x="10.4" y="413.8" width="1.2" height="1.2" fill="#333"/><path d="M8.5 422.0h5" stroke="#333"/><rect x="10.4" y="429.0" width="1.2" height="1.2" fill="#333"/><text transform="translate(14.5 406.8) rotate(-90)" font-size="10" fill="#222" text-anchor="middle" font-family="Liberation Sans">12</text><rect x="10.4" y="444.1" width="1.2" height="1.2" fill="#333"/><path d="M8.5 452.3h5" stroke="#333"/><rect x="10.4" y="459.3" width="1.2" height="1.2" fill="#333"/><text transform="translate(14.5 437.2) rotate(-90)" font-size="10" fill="#222" text-anchor="middle" font-family="Liberation Sans">13</text><rect x="10.4" y="474.5" width="1.2" height="1.2" fill="#333"/><path d="M8.5 482.7h5" stroke="#333"/><rect x="10.4" y="489.7" width="1.2" height="1.2" fill="#333"/><text transform="translate(14.5 467.5) rotate(-90)" font-size="10" fill="#222" text-anchor="middle" font-family="Liberation Sans">14</text><rect x="10.4" y="504.8" width="1.2" height="1.2" fill="#333"/><path d="M8.5 513.0h5" stroke="#333"/><rect x="10.4" y="520.0" width="1.2" height="1.2" fill="#333"/><text transform="translate(14.5 497.9) rotate(-90)" font-size="10" fill="#222" text-anchor="middle" font-family="Liberation Sans">15</text><rect x="10.4" y="535.2" width="1.2" height="1.2" fill="#333"/><path d="M8.5 543.4h5" stroke="#333"/><rect x="10.4" y="550.4" width="1.2" height="1.2" fill="#333"/><text transform="translate(14.5 528.2) rotate(-90)" font-size="10" fill="#222" text-anchor="middle" font-family="Liberation Sans">16</text><rect x="10.4" y="565.5" width="1.2" height="1.2" fill="#333"/><path d="M8.5 573.7h5" stroke="#333"/><rect x="10.4" y="580.7" width="1.2" height="1.2" fill="#333"/><text transform="translate(14.5 558.5) rotate(-90)" font-size="10" fill="#222" text-anchor="middle" font-family="Liberation Sans">17</text><rect x="10.4" y="595.9" width="1.2" height="1.2" fill="#333"/><path d="M8.5 604.1h5" stroke="#333"/><rect x="10.4" y="611.1" width="1.2" height="1.2" fill="#333"/><text transform="translate(14.5 588.9) rotate(-90)" font-size="10" fill="#222" text-anchor="middle" font-family="Liberation Sans">18</text><rect x="10.4" y="626.2" width="1.2" height="1.2" fill="#333"/><path d="M8.5 634.4h5" stroke="#333"/><rect x="10.4" y="641.4" width="1.2" height="1.2" fill="#333"/><text transform="translate(14.5 619.2) rotate(-90)" font-size="10" fill="#222" text-anchor="middle" font-family="Liberation Sans">19</text><rect x="10.4" y="656.6" width="1.2" height="1.2" fill="#333"/><path d="M8.5 664.8h5" stroke="#333"/><rect x="10.4" y="671.8" width="1.2" height="1.2" fill="#333"/><text transform="translate(14.5 649.6) rotate(-90)" font-size="10" fill="#222" text-anchor="middle" font-family="Liberation Sans">20</text><text transform="translate(14.5 680.0) rotate(-90)" font-size="10" fill="#222" text-anchor="middle" font-family="Liberation Sans">21</text><rect x="10.5" y="155.9" width="1" height="1" fill="#555"/></svg></div>
<div class="a" style="left:44px;top:155px;width:1px;height:525px;background:#cfcfcf"></div>
<div class="a" style="left:45px;top:155px;width:634px;height:525px;background:#fff"></div>
<div class="a" style="left:679px;top:155px;width:1px;height:525px;background:#d5d5d5"></div>
<div class="a" style="left:693px;top:155px;width:1px;height:525px;background:#cfcfcf"></div>
<div class="a" style="left:694px;top:155px;width:634px;height:525px;background:#fff"></div>
<div class="a" style="left:1328px;top:155px;width:1px;height:525px;background:#d5d5d5"></div>
<div class="a" style="left:1350px;top:155px;width:16px;height:525px;background:#f0f0f0"></div>
<div class="a" style="left:1350px;top:158px;width:15px;height:14px;background:#fff;border:1px solid #aaa"></div>
<svg class="a" style="left:1354px;top:163px;" width="8" height="5" viewBox="0 0 8 5"><path d="M0 5h8L4 0z" fill="#222"/></svg>
<div class="a" style="left:1350px;top:663px;width:15px;height:15px;background:#fff;border:1px solid #aaa"></div>
<svg class="a" style="left:1354px;top:668px;" width="8" height="5" viewBox="0 0 8 5"><path d="M0 0h8L4 5z" fill="#222"/></svg>
<div class="a" style="left:1350px;top:590px;width:15px;height:17px;background:#fff;border:1px solid #999"></div>
<div class="a" style="left:0px;top:680px;width:1366px;height:22px;background:#f3f3f3;border-top:1px solid #d4d4d4"></div>
<div class="a t fw" style="left:12.1px;top:685.5px;font-size:11.6px;color:#444;font-weight:normal;--w:68;">Page 73 of 81</div>
<div class="a t fw" style="left:100.3px;top:685.5px;font-size:11.6px;color:#444;font-weight:normal;--w:64;">16403 words</div>
<svg class="a" style="left:183px;top:683px;" width="16" height="15" viewBox="0 0 16 15"><path d="M.5 1.5c2-1 5-1 7 0v12c-2-1-5-1-7 0zM7.5 1.5c1-.5 2-.7 3-.7M7.5 13.5c1-.5 2-.7 3-.7" fill="none" stroke="#666" stroke-width="1"/><path d="M10 4l4 4M14 4l-4 4" stroke="#666" stroke-width="1"/></svg>
<div class="a t fw" style="left:216.2px;top:685.5px;font-size:11.6px;color:#444;font-weight:normal;--w:65.3;">Persian (Iran)</div>
<svg class="a" style="left:300px;top:683px;" width="16" height="15" viewBox="0 0 16 15"><path d="M4 2.5a5.5 5.5 0 1 0 3 10" fill="none" stroke="#555" stroke-width="1.2" stroke-dasharray="2 1.2"/><path d="M6 0v5" stroke="#555" stroke-width="1.2"/><text x="8" y="14" font-size="11" font-weight="bold" fill="#444" font-family="Liberation Sans">?</text></svg>
<div class="a t fw" style="left:318.2px;top:685.7px;font-size:11.6px;color:#444;font-weight:normal;--w:126.2;">Accessibility: Unavailable</div>
<svg class="a" style="left:1079px;top:684px;" width="14" height="14" viewBox="0 0 14 14"><path d="M.5 1.5c2 0 4 .5 6 1.5 2-1 4-1.5 6-1.5v11c-2 0-4 .5-6 1.5-2-1-4-1.5-6-1.5z" fill="none" stroke="#666"/><path d="M6.5 3v11M2 4.5h3M2 7h3M2 9.5h3M8 4.5h3M8 7h3M8 9.5h3" stroke="#888" stroke-width=".8"/></svg>
<div class="a" style="left:1106px;top:681px;width:40px;height:21px;background:#c8c8c8"></div>
<svg class="a" style="left:1119px;top:684px;" width="14" height="13" viewBox="0 0 14 13"><path d="M.5 .5h13v12H.5z" fill="none" stroke="#666"/><path d="M3 3h8M3 5.5h8M3 8h8M3 10.5h8" stroke="#666" stroke-width="1"/></svg>
<svg class="a" style="left:1159px;top:684px;" width="14" height="14" viewBox="0 0 14 14"><path d="M.5 .5h10v12H.5z" fill="none" stroke="#666"/><path d="M3 3h6M3 5.5h6M3 8h4" stroke="#666" stroke-width="1"/><circle cx="10.5" cy="10.5" r="3.3" fill="#fff" stroke="#555" stroke-width="1.2"/><path d="M8.3 12.7l4.4-4.4" stroke="#555"/></svg>
<div class="a" style="left:1192px;top:690px;width:8px;height:1px;background:#555"></div>
<div class="a" style="left:1205px;top:690px;width:100px;height:1px;background:#666"></div>
<div class="a" style="left:1255px;top:687px;width:1px;height:7px;background:#666"></div>
<div class="a" style="left:1242px;top:686px;width:5px;height:11px;background:#555"></div>
<svg class="a" style="left:1309px;top:686px;" width="9" height="9" viewBox="0 0 9 9"><path d="M4.5 0v9M0 4.5h9" stroke="#555" stroke-width="1"/></svg>
<div class="a t fw" style="left:1331.0px;top:685.2px;font-size:11.6px;color:#444;font-weight:normal;--w:20.9;">80%</div>
<div class="a" style="left:0px;top:702px;width:1366px;height:12px;background:#2e211b"></div>
<div class="a" style="left:0px;top:702px;width:48px;height:12px;background:#2d2b1f"></div>
<div class="a" style="left:48px;top:702px;width:289px;height:12px;background:#ececec"></div>
<div class="a" style="left:632px;top:702px;width:48px;height:12px;background:#544a44"></div>
<div class="a" style="left:269px;top:703px;width:20px;height:11px;background:radial-gradient(circle at 50% 70%,#666,#aaa 40%,#ececec 75%)"></div>
<div class="a" style="left:302px;top:706px;width:29px;height:8px;background:radial-gradient(ellipse at 50% 100%,#1a1410,#3a2a20 55%,#ececec 72%)"></div>
<div class="a" style="left:404px;top:709px;width:13px;height:5px;background:#4aa0e0;border-radius:1px"></div>
<div class="a" style="left:449px;top:709px;width:21px;height:5px;background:#2bb5b3;border-radius:10px 10px 0 0"></div>
<div class="a" style="left:497px;top:711px;width:13px;height:3px;background:#d9a64e;border-radius:1px"></div>
<div class="a" style="left:552px;top:710px;width:16px;height:4px;background:#2f6db5;border-radius:1px"></div>
<div class="a" style="left:606px;top:709px;width:9px;height:5px;background:#f2c232;border-radius:5px 5px 0 0"></div>
<div class="a" style="left:649.5px;top:709px;width:18.5px;height:5px;background:#5a9ae0;border-radius:1px"></div>
<div class="a" style="left:709px;top:710px;width:10px;height:4px;background:#d9cbb0;border-radius:3px"></div>
<div class="a" style="left:743px;top:710px;width:21px;height:4px;background:#c8191e;border-radius:2px"></div>
<div class="a t fw" style="left:1256.0px;top:706.7px;font-size:11.6px;color:#fff;font-weight:normal;--w:48.5;">10:09 AM</div>
<div class="a" style="left:1359px;top:702px;width:7px;height:12px;background:#4a3a33"></div>
<svg class="a" style="left:0;top:0" width="700" height="700"><path d="M184.63 482.29L178.89 472.75L173.68 462.92L169.02 452.83L164.91 442.49L161.37 431.95L158.42 421.23L156.05 410.37L154.28 399.39L153.12 388.34L152.56 377.24L152.60 366.13L153.25 355.03L154.51 343.99L156.36 333.03L158.82 322.19L161.86 311.49L165.48 300.98L169.67 290.68L174.41 280.62L179.70 270.83M214.54 226.08L222.59 218.67L231.03 211.70L239.83 205.19L248.97 199.16L258.41 193.62L268.14 188.59L278.13 184.08L288.34 180.11L298.76 176.68L309.34 173.82L320.06 171.52L330.88 169.79L341.79 168.64L352.74 168.07L363.70 168.08L374.65 168.67L385.56 169.85L396.38 171.60L407.09 173.92L417.67 176.81L428.07 180.26L438.28 184.25L448.26 188.78L457.97 193.83M499.64 224.33L507.55 232.24L515.01 240.56L522.00 249.28L528.51 258.36L534.51 267.78L539.99 277.51L544.92 287.53L549.30 297.80L553.11 308.29L556.34 318.97M562.55 352.91L563.31 363.79L563.49 374.70L563.08 385.60L562.08 396.46L560.51 407.25L558.36 417.95L555.64 428.51L552.36 438.92L548.52 449.14L544.15 459.14L539.24 468.89L533.82 478.37L527.90 487.55L521.49 496.40L514.62 504.90L507.30 513.02L499.56 520.74L491.42 528.04L482.89 534.90L474.02 541.29L464.81 547.21L455.29 552.63L445.51 557.53L435.47 561.91L425.21 565.75L414.76 569.05L404.15 571.78L393.41 573.94L382.56 575.53L371.65 576.55L360.70 576.98L349.74 576.83L338.80 576.11L327.92 574.80L317.12 572.91L306.44 570.46L295.91 567.44L285.55 563.87L275.40 559.76L265.49 555.11L255.84 549.94L246.48 544.27L237.43 538.10L228.73 531.47L220.40 524.39L212.45 516.87L204.93 508.94" fill="none" stroke="#000" stroke-width="2.4" stroke-linecap="butt"/><path d="M288.33 508.12L280.95 504.26L273.80 499.98L266.89 495.30L260.23 490.24L253.86 484.80L247.80 479.01L242.05 472.89L236.65 466.44M233.55 462.41L228.92 455.80L224.64 448.95L220.72 441.88L217.16 434.60L213.99 427.14L211.20 419.52L208.82 411.75L206.83 403.87L205.25 395.89L204.09 387.83L203.34 379.72L203.02 371.59L203.11 363.44L203.62 355.32L204.55 347.23L205.89 339.21L207.65 331.27L209.81 323.43L212.38 315.73L215.33 308.17L218.67 300.79L222.39 293.60L226.47 286.62L230.91 279.87L235.69 273.38L240.79 267.15L246.21 261.21L251.93 255.58L257.93 250.26L264.20 245.28L270.71 240.64L277.45 236.37L284.41 232.47L291.55 228.95L298.87 225.83L306.33 223.11L313.93 220.80L321.63 218.91L329.42 217.44L337.28 216.40L345.18 215.78L353.10 215.60L361.01 215.85L368.91 216.53L376.76 217.64L384.53 219.17L392.22 221.13L399.80 223.50L407.25 226.28L414.54 229.46L421.66 233.03L428.58 236.99L435.29 241.32L441.76 246.01L447.99 251.04L453.95 256.40L459.62 262.09L465.00 268.07L470.05 274.34L474.78 280.87L479.16 287.66L483.19 294.67L486.85 301.89L490.14 309.30L493.04 316.88L495.54 324.60L497.64 332.46L499.34 340.41M500.71 389.45L499.46 397.48L497.81 405.44L495.74 413.30L493.28 421.03L490.42 428.62L487.17 436.05L483.54 443.28L479.55 450.31L475.20 457.11L470.51 463.67L465.48 469.96L460.14 475.96L454.50 481.67L448.57 487.06L442.37 492.13L435.92 496.85L429.24 501.21L422.34 505.20L415.24 508.81L407.97 512.03L400.54 514.85L392.98 517.26L385.31 519.25L377.54 520.83L369.70 521.98L361.82 522.70L353.91 522.99L345.99 522.85L338.09 522.28L330.24 521.29L322.44 519.86L314.73 518.01L307.13 515.75L299.65 513.08" fill="none" stroke="#000" stroke-width="2.4" stroke-linecap="butt"/><path d="M302.37 453.48L297.70 450.27L293.21 446.79L288.92 443.06M270.73 420.79L267.57 415.19L264.75 409.39M256.43 380.44L255.75 374.28L255.43 368.08L255.46 361.87L255.86 355.68L256.61 349.52L257.71 343.42M268.89 313.56L271.71 308.83L274.76 304.25L278.05 299.86L281.57 295.65L285.29 291.65L289.22 287.87L293.34 284.31L297.63 280.98L302.09 277.90L306.70 275.08L311.46 272.52L316.34 270.23L321.33 268.22L326.41 266.48L331.58 265.04L336.82 263.89L342.11 263.04L347.43 262.48L352.78 262.22L358.13 262.26L363.47 262.60L368.78 263.25L374.06 264.18L379.28 265.42L384.43 266.94L389.49 268.75L394.45 270.84L399.29 273.21M434.86 304.57L438.17 309.59L441.19 314.80L443.91 320.19L446.32 325.74L448.42 331.42M452.95 380.56L452.04 386.04L450.85 391.45L449.37 396.79L447.63 402.04L445.61 407.19L443.34 412.22L440.80 417.11L438.02 421.85L435.00 426.43L431.75 430.83L428.27 435.05L424.58 439.06L420.69 442.87L416.61 446.45L412.35 449.79L407.92 452.90L403.34 455.75L398.62 458.34L393.77 460.66L388.81 462.71L383.75 464.48L378.61 465.96L373.40 467.15L368.13 468.05L362.83 468.65L357.50 468.96L352.16 468.97L346.83 468.67L341.53 468.09L336.26 467.20L331.04 466.02L325.90 464.55" fill="none" stroke="#000" stroke-width="1.5" stroke-linecap="butt"/><defs><pattern id="hatch" patternUnits="userSpaceOnUse" width="8" height="4.4" patternTransform="rotate(-26)"><path d="M0 2.2h8" stroke="#000" stroke-width="1.5"/></pattern></defs><path d="M303.6 358.2L297.3 361.7L291 366L286.5 372.2L287.5 386.2L291 396L298 404.4L312 412.8L320.4 419.8L330.2 426.1L340 425.4L346.3 419.8L340 415.6L336.65 414.36L333.40 412.85L330.26 411.12L327.24 409.17L324.35 407.01L321.61 404.65L319.04 402.11L316.63 399.39L314.41 396.51L312.38 393.48L310.55 390.31L308.94 387.03L307.54 383.63L306.37 380.15L305.43 376.60L304.72 372.98L304.25 369.32L304.02 365.64L304.04 361.95L304.29 358.28Z" fill="url(#hatch)" stroke="#000" stroke-width="1.6"/><ellipse cx="356.5" cy="364" rx="52.5" ry="54.4" fill="none" stroke="#000" stroke-width="1.5"/><path d="M308.2 164.1L399 387Q404 397 416.7 408.4L432.5 425.2L452 453L460.5 476L463.5 515L490 558.3" fill="none" stroke="#000" stroke-width="2.5" stroke-linejoin="round"/><rect x="359.5" y="437.2" width="22.3" height="93" fill="#fff" stroke="#000" stroke-width="1.3"/><path d="M366.4 437.2v93" stroke="#000" stroke-width="1.1"/><path d="M375.6 437.2v93" stroke="#000" stroke-width="1.1"/><path d="M359.5 440.4h24.5" stroke="#000" stroke-width="1"/><path d="M359.5 443.6h22.3" stroke="#000" stroke-width="1"/><path d="M359.5 446.8h24.5" stroke="#000" stroke-width="1"/><path d="M359.5 449.9h22.3" stroke="#000" stroke-width="1"/><path d="M359.5 453.1h24.5" stroke="#000" stroke-width="1"/><path d="M359.5 456.3h22.3" stroke="#000" stroke-width="1"/><path d="M359.5 459.5h24.5" stroke="#000" stroke-width="1"/><path d="M359.5 462.7h22.3" stroke="#000" stroke-width="1"/><path d="M359.5 465.8h24.5" stroke="#000" stroke-width="1"/><path d="M359.5 469.0h22.3" stroke="#000" stroke-width="1"/><path d="M359.5 472.2h24.5" stroke="#000" stroke-width="1"/><path d="M359.5 475.4h22.3" stroke="#000" stroke-width="1"/><path d="M359.5 478.6h24.5" stroke="#000" stroke-width="1"/><path d="M359.5 481.7h22.3" stroke="#000" stroke-width="1"/><path d="M359.5 484.9h24.5" stroke="#000" stroke-width="1"/><path d="M359.5 488.1h22.3" stroke="#000" stroke-width="1"/><path d="M359.5 491.3h24.5" stroke="#000" stroke-width="1"/><path d="M359.5 494.5h22.3" stroke="#000" stroke-width="1"/><path d="M359.5 497.6h24.5" stroke="#000" stroke-width="1"/><path d="M359.5 500.8h22.3" stroke="#000" stroke-width="1"/><path d="M359.5 504.0h24.5" stroke="#000" stroke-width="1"/><path d="M359.5 507.2h22.3" stroke="#000" stroke-width="1"/><path d="M359.5 510.4h24.5" stroke="#000" stroke-width="1"/><path d="M359.5 513.5h22.3" stroke="#000" stroke-width="1"/><path d="M359.5 516.7h24.5" stroke="#000" stroke-width="1"/><path d="M359.5 519.9h22.3" stroke="#000" stroke-width="1"/><path d="M359.5 523.1h24.5" stroke="#000" stroke-width="1"/><path d="M359.5 526.3h22.3" stroke="#000" stroke-width="1"/><path d="M359.5 529.4h24.5" stroke="#000" stroke-width="1"/><path d="M357 449.3h3" stroke="#000" stroke-width="1"/><path d="M357 459.4h3" stroke="#000" stroke-width="1"/><path d="M357 478h3" stroke="#000" stroke-width="1"/><path d="M357 497h3" stroke="#000" stroke-width="1"/><path d="M357 516h3" stroke="#000" stroke-width="1"/></svg>
<div class="a t fw" dir="rtl" style="left:447.5px;top:202.9px;font-size:12px;color:#000;font-weight:normal;--w:72.7;-webkit-text-stroke:.25px #000;">دریاچه میشیگان</div>
<div class="a t fw" dir="rtl" style="left:152.6px;top:233.7px;font-size:12px;color:#000;font-weight:normal;--w:65.7;-webkit-text-stroke:.25px #000;">واحدهای مسکونی</div>
<div class="a t fw" dir="rtl" style="left:157.8px;top:250.3px;font-size:12px;color:#000;font-weight:normal;--w:56.5;-webkit-text-stroke:.25px #000;">مستقل برای هر</div>
<div class="a t fw" dir="rtl" style="left:398.9px;top:283.9px;font-size:12px;color:#000;font-weight:normal;--w:55.3;-webkit-text-stroke:.25px #000;">اجاره‌نشینان</div>
<div class="a t fw" dir="rtl" style="left:236.0px;top:323.4px;font-size:12px;color:#000;font-weight:normal;--w:45.5;-webkit-text-stroke:.25px #000;">ایتالیایی‌ها</div>
<div class="a t fw" dir="rtl" style="left:515.5px;top:329.4px;font-size:12px;color:#000;font-weight:normal;--w:86.2;-webkit-text-stroke:.25px #000;">ناحیه ثروتمندنشین</div>
<div class="a t fw" dir="rtl" style="left:418.7px;top:340.0px;font-size:12px;color:#000;font-weight:normal;--w:27.6;-webkit-text-stroke:.25px #000;">منطقه</div>
<div class="a t fw" dir="rtl" style="left:483.0px;top:351.1px;font-size:12px;color:#000;font-weight:normal;--w:39.6;-webkit-text-stroke:.25px #000;">واحدهای</div>
<div class="a t fw" dir="rtl" style="left:418.7px;top:361.0px;font-size:12px;color:#000;font-weight:normal;--w:24.9;-webkit-text-stroke:.25px #000;">تحول</div>
<div class="a t fw" dir="rtl" style="left:325.8px;top:372.8px;font-size:12px;color:#000;font-weight:normal;--w:40.2;-webkit-text-stroke:.25px #000;">مرکز شهر</div>
<div class="a t fw" dir="rtl" style="left:481.9px;top:370.9px;font-size:12px;color:#000;font-weight:normal;--w:39.5;-webkit-text-stroke:.25px #000;">مسکونی،</div>
<div class="a t fw" dir="rtl" style="left:242.8px;top:388.6px;font-size:12px;color:#000;font-weight:normal;--w:32.4;-webkit-text-stroke:.25px #000;">چینی‌ها</div>
<div class="a t fw" dir="rtl" style="left:235.8px;top:421.9px;font-size:12px;color:#000;font-weight:normal;--w:19.7;-webkit-text-stroke:.25px #000;">محلهٔ</div>
<div class="a t fw" dir="rtl" style="left:235.8px;top:438.7px;font-size:12px;color:#000;font-weight:normal;--w:22.7;-webkit-text-stroke:.25px #000;">آلمانی-</div>
<div class="a t fw" dir="rtl" style="left:278.7px;top:426.1px;font-size:12px;color:#000;font-weight:normal;--w:28.1;-webkit-text-stroke:.25px #000;">زاغه‌ها</div>
<div class="a t fw" dir="rtl" style="left:311.4px;top:442.9px;font-size:12px;color:#000;font-weight:normal;--w:34.5;-webkit-text-stroke:.25px #000;">مراکز فساد</div>
<div class="a t fw" dir="rtl" style="left:297.6px;top:476.6px;font-size:12px;color:#000;font-weight:normal;--w:48.3;-webkit-text-stroke:.25px #000;">ساختمان‌های</div>
<div class="a t fw" dir="rtl" style="left:307.2px;top:495.4px;font-size:12px;color:#000;font-weight:normal;--w:26.1;-webkit-text-stroke:.25px #000;">دوطبقه</div>
<div class="a t fw" dir="rtl" style="left:394.2px;top:477.8px;font-size:12px;color:#000;font-weight:normal;--w:33.6;-webkit-text-stroke:.25px #000;">سپاهان</div>
<div class="a t fw" dir="rtl" style="left:168.6px;top:490.4px;font-size:12px;color:#000;font-weight:normal;--w:53.3;-webkit-text-stroke:.25px #000;">ساختمان‌های</div>
<div class="a t fw" dir="rtl" style="left:322.8px;top:543.8px;font-size:12px;color:#000;font-weight:normal;--w:81.9;-webkit-text-stroke:.25px #000;">منطقه زیبا و روشن</div>
<div class="a t fw" dir="rtl" style="left:306.0px;top:579.5px;font-size:12px;color:#000;font-weight:normal;--w:119.7;-webkit-text-stroke:.25px #000;">واحدهای مسکونی یک‌طبقه</div>
<div class="a t fw" dir="rtl" style="left:562.0px;top:412.6px;font-size:12px;color:#000;font-weight:normal;--w:56.0;-webkit-text-stroke:.25px #000;">محل سکونت</div>
<div class="a t fw" dir="rtl" style="left:559.0px;top:434.2px;font-size:12px;color:#000;font-weight:normal;--w:64.0;-webkit-text-stroke:.25px #000;">افرادی که برای</div>
<div class="a t fw" dir="rtl" style="left:568.0px;top:453.3px;font-size:12px;color:#000;font-weight:normal;--w:46.0;-webkit-text-stroke:.25px #000;">انجام دادن</div>
<div class="a t fw" dir="rtl" style="left:555.0px;top:473.5px;font-size:12px;color:#000;font-weight:normal;--w:70.0;-webkit-text-stroke:.25px #000;">کارهای روزانه به</div>
<div class="a t fw" dir="rtl" style="left:552.0px;top:493.9px;font-size:12px;color:#000;font-weight:normal;--w:77.0;-webkit-text-stroke:.25px #000;">مرکز شهر عزیمت</div>
<div class="a t fw" dir="rtl" style="left:573.0px;top:514.6px;font-size:12px;color:#000;font-weight:normal;--w:35.0;-webkit-text-stroke:.25px #000;">می‌کنند</div>
<div class="a t fw" dir="rtl" style="left:337.6px;top:355.1px;font-size:12px;color:#000;font-weight:normal;--w:17.8;-webkit-text-stroke:.25px #000;">لوپ</div>
<div class="a" style="left:337px;top:367px;width:19px;height:1px;background:#000"></div>
<div class="a t fw" dir="rtl" style="left:319.4px;top:634.2px;font-size:13px;color:#000;font-weight:bold;--w:98.8;">نظریه ارنست برگس</div>
<div class="a t" style="left:374.9px;top:382.5px;width:8px;text-align:center;font-size:14px;color:#000;-webkit-text-stroke:.3px #000">۱</div>
<div class="a t" style="left:422px;top:385.7px;width:8px;text-align:center;font-size:14px;color:#000;-webkit-text-stroke:.3px #000">۲</div>
<div class="a t" style="left:463px;top:387px;width:8px;text-align:center;font-size:14px;color:#000;-webkit-text-stroke:.3px #000">۳</div>
<div class="a t" style="left:522.3px;top:389.5px;width:8px;text-align:center;font-size:14px;color:#000;-webkit-text-stroke:.3px #000">۴</div>
<div class="a t" style="left:569px;top:387px;width:8px;text-align:center;font-size:14px;color:#000;-webkit-text-stroke:.3px #000">۵</div>
<div class="a t" dir="rtl" style="left:468px;top:496px;width:32px;text-align:center;font-size:11px;color:#000;transform:rotate(90deg)">هتل‌ها</div>
<svg class="a" style="left:0;top:0" width="1366" height="700"><path d="M864 258.8H1044.6" stroke="#111" stroke-width="1"/><path d="M864 273.5H1044.6" stroke="#111" stroke-width="1"/><path d="M864 288.2H1044.6" stroke="#111" stroke-width="1"/><path d="M864 302.9H1044.6" stroke="#111" stroke-width="1"/><path d="M864 317.6H1044.6" stroke="#111" stroke-width="1"/><path d="M864 332.4H1044.6" stroke="#111" stroke-width="1"/><path d="M864 347.1H1044.6" stroke="#111" stroke-width="1"/><path d="M864 361.8H1044.6" stroke="#111" stroke-width="1"/><path d="M864 376.5H1044.6" stroke="#111" stroke-width="1"/><path d="M864 391.2H1044.6" stroke="#111" stroke-width="1"/><path d="M864 405.9H1044.6" stroke="#111" stroke-width="1"/><path d="M884.2 257V421" stroke="#111" stroke-width="1"/><path d="M900.6 257V421" stroke="#111" stroke-width="1"/><path d="M917.0 257V421" stroke="#111" stroke-width="1"/><path d="M933.5 257V421" stroke="#111" stroke-width="1"/><path d="M949.9 257V421" stroke="#111" stroke-width="1"/><path d="M966.3 257V421" stroke="#111" stroke-width="1"/><path d="M982.7 257V421" stroke="#111" stroke-width="1"/><path d="M999.1 257V421" stroke="#111" stroke-width="1"/><path d="M1015.6 257V421" stroke="#111" stroke-width="1"/><path d="M1032.0 257V421" stroke="#111" stroke-width="1"/><ellipse cx="955.7" cy="337.5" rx="59.5" ry="54.3" fill="#fff" stroke="#000" stroke-width="1"/><ellipse cx="956.8" cy="340.5" rx="34" ry="30.3" fill="none" stroke="#000" stroke-width="1"/><ellipse cx="957.4" cy="340.6" rx="14.4" ry="12.6" fill="#808080"/><path d="M955 337.8L903.1 296.0" stroke="#000" stroke-width="1.8"/><path d="M897.6 291.6L904.9 293.7L901.2 298.3z" fill="#000"/><path d="M1006.3 335L1033.2 352.7" stroke="#000" stroke-width="1.8"/><path d="M1039 356.6L1031.5 355.2L1034.8 350.2z" fill="#000"/><path d="M960.6 363.9L957.9 396.0" stroke="#000" stroke-width="1.8"/><path d="M957.3 403L954.9 395.8L960.9 396.3z" fill="#000"/><circle cx="955" cy="337.8" r="5.2" fill="#000"/><circle cx="1006.3" cy="335" r="5.2" fill="#000"/><circle cx="960.6" cy="363.9" r="5.2" fill="#000"/></svg>
<div class="a t fw" dir="rtl" style="left:863.4px;top:270.4px;font-size:11px;color:#000;font-weight:bold;--w:53.8;background:#fff;">محیط رفتاری</div>
<div class="a t fw" dir="rtl" style="left:1003.5px;top:375.4px;font-size:11px;color:#000;font-weight:bold;--w:48.7;background:#fff;">محیط عملی</div>
<div class="a t fw" dir="rtl" style="left:894.8px;top:415.5px;font-size:11px;color:#000;font-weight:bold;--w:51.8;background:#fff;">محیط ادارکی</div>
<svg class="a" style="left:0;top:0" width="1366" height="700"><circle cx="821.2" cy="258.7" r="3.6" fill="#9a9a9a" stroke="#777" stroke-width=".6"/><circle cx="1133" cy="258.7" r="3.6" fill="#9a9a9a" stroke="#777" stroke-width=".6"/><circle cx="821.2" cy="507.8" r="3.6" fill="#9a9a9a" stroke="#777" stroke-width=".6"/><circle cx="1133" cy="507.8" r="3.6" fill="#9a9a9a" stroke="#777" stroke-width=".6"/><rect x="973.9" y="255.2" width="7" height="7" fill="#9a9a9a" stroke="#777" stroke-width=".6"/><rect x="817.7" y="379.5" width="7" height="7" fill="#9a9a9a" stroke="#777" stroke-width=".6"/><rect x="1129.5" y="379.5" width="7" height="7" fill="#9a9a9a" stroke="#777" stroke-width=".6"/><rect x="973.9" y="504.3" width="7" height="7" fill="#9a9a9a" stroke="#777" stroke-width=".6"/><path d="M977.4 242.5V255" stroke="#888" stroke-width="1"/><circle cx="977.4" cy="239.2" r="3.6" fill="#3fc33f" stroke="#2a9a2a" stroke-width=".6"/><circle cx="790.5" cy="366" r=".8" fill="#777"/></svg>
<div class="a" style="left:1077.5px;top:447px;width:13.5px;height:22px;background:#ffff00"></div>
<div class="a t fw" dir="rtl" style="left:1098.0px;top:452.2px;font-size:12.5px;color:#000;font-weight:normal;--w:23.2;-webkit-text-stroke:.25px #000;">شکل</div>
<div class="a t fw" dir="rtl" style="left:1078.0px;top:452.2px;font-size:12.5px;color:#000;font-weight:normal;--w:13.0;-webkit-text-stroke:.25px #000;">......</div>
<div class="a t fw" dir="rtl" style="left:1046.8px;top:452.2px;font-size:12.5px;color:#000;font-weight:normal;--w:24.0;-webkit-text-stroke:.25px #000;">فضای</div>
<div class="a t fw" dir="rtl" style="left:1009.0px;top:452.2px;font-size:12.5px;color:#000;font-weight:normal;--w:31.5;-webkit-text-stroke:.25px #000;">رفتاری</div>
<div class="a t fw" dir="rtl" style="left:977.5px;top:452.2px;font-size:12.5px;color:#000;font-weight:normal;--w:24.3;-webkit-text-stroke:.25px #000;">مردم</div>
<div class="a t fw" dir="rtl" style="left:954.4px;top:452.2px;font-size:12.5px;color:#000;font-weight:normal;--w:12.6;-webkit-text-stroke:.25px #000;">در</div>
<div class="a t fw" dir="rtl" style="left:920.8px;top:452.2px;font-size:12.5px;color:#000;font-weight:normal;--w:25.2;-webkit-text-stroke:.25px #000;">محیط</div>
<div class="a t fw" dir="rtl" style="left:884.2px;top:452.2px;font-size:12.5px;color:#000;font-weight:normal;--w:29.4;-webkit-text-stroke:.25px #000;">فیزیکی</div>
<div class="a t fw" dir="rtl" style="left:827.0px;top:452.2px;font-size:12.5px;color:#000;font-weight:normal;--w:48.8;-webkit-text-stroke:.25px #000;">(رپوپورت،</div>
<div class="a t fw" dir="rtl" style="left:1088.8px;top:474.8px;font-size:12.5px;color:#000;font-weight:normal;--w:35.7;-webkit-text-stroke:.25px #000;">۱۹۹۷).</div><script>
document.querySelectorAll('.fw').forEach(function(e){var w=parseFloat(getComputedStyle(e).getPropertyValue('--w'));var ow=e.getBoundingClientRect().width;if(ow>0&&w>0){e.style.transform='scaleX('+(w/ow)+')';}});
</script>
</body></html>
